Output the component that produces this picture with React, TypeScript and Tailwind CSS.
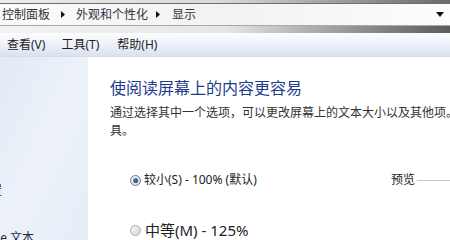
import React from "react";

const Tri = () => (
  <svg width="4" height="7" viewBox="0 0 4 7" className="shrink-0">
    <path d="M0 0 L4 3.5 L0 7 Z" fill="#111" />
  </svg>
);

export default function App() {
  return (
    <div className="w-[450px] h-[240px] overflow-hidden bg-white flex flex-col font-['Noto_Sans','Noto_Sans_CJK_SC',sans-serif]">
      {/* top glass strip */}
      <div className="h-[3px] shrink-0 bg-gradient-to-r from-[#ececec] via-[#d8d8d8] to-[#6a6a6a]" />
      {/* address box */}
      <div className="h-[23px] shrink-0 border-t border-b border-t-[#6e6e6e] border-b-[#a9a9a9] bg-gradient-to-r from-[#fbfbfb] via-[#f2f2f2] to-[#fdfdfd] flex items-center pl-[2px] pr-[6px] text-[12px] leading-none text-[#333]">
        <span>控制面板</span>
        <span className="mx-[11px] flex items-center"><Tri /></span>
        <span>外观和个性化</span>
        <span className="ml-[8px] mr-[12px] flex items-center"><Tri /></span>
        <span>显示</span>
        <div className="flex-1" />
        <svg width="8" height="5" viewBox="0 0 8 5">
          <path d="M0 0 L8 0 L4 5 Z" fill="#111" />
        </svg>
      </div>
      {/* glass band */}
      <div className="h-[7px] shrink-0 bg-gradient-to-r from-[#f3f3f3] via-[#e6e6e6] to-[#5c5c5c]" />
      {/* menu bar */}
      <div className="h-[24px] shrink-0 bg-gradient-to-b from-[#fdfdff] via-[#eef1fa] to-[#dbe1f2] border-b border-[#d6dcec] flex items-center text-[12px] leading-none text-[#1e1e1e]">
        <span className="ml-[7px]">查看(V)</span>
        <span className="ml-[16px]">工具(T)</span>
        <span className="ml-[18px]">帮助(H)</span>
      </div>
      {/* body */}
      <div className="flex flex-1 min-h-0">
        <div className="w-[88px] shrink-0 overflow-hidden bg-gradient-to-br from-[#e2eaf5] via-[#edf2f9] to-[#e6edf7] text-[12px] leading-[18px] text-[#1a2a44] whitespace-nowrap">
          <div className="mt-[125px] ml-[-82px]">更改显示器设置</div>
          <div className="mt-[29px] ml-[-76px]">调整 ClearType 文本</div>
        </div>
        <div className="flex-1 min-w-0 overflow-hidden pl-[22px]">
          <div className="mt-[21px] text-[16px] leading-[20px] text-[#1e3c8c] whitespace-nowrap">
            使阅读屏幕上的内容更容易
          </div>
          <div className="mt-[6px] text-[12px] leading-[18px] text-[#333] whitespace-nowrap">
            通过选择其中一个选项，可以更改屏幕上的文本大小以及其他项。要暂时放大部分屏幕，请使用放大镜工
          </div>
          <div className="text-[12px] leading-[18px] text-[#333]">具。</div>
          <div className="mt-[31px] flex items-center h-[18px] text-[12px] leading-[18px] text-[#222]">
            <div className="w-[281px] shrink-0 flex items-center">
              <span className="ml-[20px] w-[11px] h-[11px] rounded-full border border-[#6f7a86] bg-gradient-to-br from-[#f4f4f4] to-[#d6d6d6] flex items-center justify-center shrink-0">
                <span className="w-[5px] h-[5px] rounded-full bg-gradient-to-br from-[#5a9ad8] to-[#123d78]" />
              </span>
              <span className="ml-[3px] whitespace-nowrap">较小(S) - 100% (默认)</span>
            </div>
            <span className="whitespace-nowrap">预览</span>
            <div className="flex-1 ml-[2px] h-px bg-[#c8c8c8]" />
          </div>
          <div className="mt-[31px] flex items-center h-[20px] text-[15px] leading-[20px] text-[#222]">
            <span className="ml-[20px] w-[11px] h-[11px] rounded-full border border-[#a8a8a8] bg-gradient-to-br from-[#f6f6f6] to-[#d9d9d9] shrink-0" />
            <span className="ml-[4px] whitespace-nowrap">中等(M) - 125%</span>
          </div>
        </div>
      </div>
    </div>
  );
}
